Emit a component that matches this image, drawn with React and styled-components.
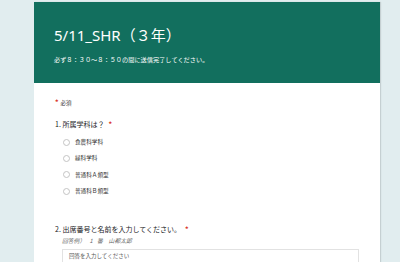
import React from 'react'
import styled, { createGlobalStyle } from 'styled-components'

const GlobalStyle = createGlobalStyle`
  body {
    margin: 0;
    background: #e1edef;
    font-family: "Noto Sans CJK JP", "Noto Sans", sans-serif;
    overflow: hidden;
  }
`

const Page = styled.div`
  padding: 2px 0 0 34px;
  height: 260px;
`

const Card = styled.section`
  width: 346px;
  background: #fff;
  box-shadow: 1px 0 1px rgba(0, 0, 0, 0.12);
  min-height: 262px;
`

const Header = styled.header`
  background: #126f5e;
  height: 81px;
  box-sizing: border-box;
  padding: 21px 20px 0 20px;
  color: #fff;
`

const Title = styled.h1`
  margin: 0;
  font-family: "Noto Sans", "Noto Sans CJK JP", sans-serif;
  font-weight: 400;
  font-size: 15px;
  line-height: 24px;
`

const Sub = styled.p`
  margin: 8px 0 0 0;
  font-size: 6.2px;
  line-height: 10px;
`

const Body = styled.div`
  padding: 14px 0 0 21px;
`

const Required = styled.div`
  font-size: 5.5px;
  line-height: 10px;
  color: #333;
`

const Star = styled.span`
  color: #d93025;
  font-size: 7px;
  font-weight: 700;
  margin-left: ${p => p.gap || 0}px;
  margin-right: ${p => p.after || 0}px;
`

const Question = styled.div`
  margin-top: ${p => p.top}px;
`

const QTitle = styled.div`
  font-size: 7px;
  line-height: 12px;
  color: #202124;
`

const Options = styled.div`
  display: flex;
  flex-direction: column;
  gap: 6.4px;
  margin: 7px 0 0 8px;
`

const Option = styled.label`
  display: flex;
  align-items: center;
  gap: 5px;
  font-size: 5.6px;
  line-height: 10px;
  color: #333;
`

const Radio = styled.span`
  width: 5px;
  height: 5px;
  border: 1px solid #c4c4c4;
  border-radius: 50%;
`

const Hint = styled.div`
  margin: 1px 0 0 7px;
  font-size: 5.8px;
  line-height: 10px;
  font-style: italic;
  color: #666;
  word-spacing: 3px;
`

const Input = styled.div`
  margin: 3px 0 0 7px;
  width: 297px;
  height: 18px;
  box-sizing: border-box;
  border: 1px solid #e2e2e2;
  padding: 1px 0 0 6px;
  font-size: 5.5px;
  line-height: 10px;
  color: #555;
`

const options = ['食農科学科', '緑科学科', '普通科Ａ類型', '普通科Ｂ類型']

export default function App () {
  return (
    <Page>
      <GlobalStyle />
      <Card>
        <Header>
          <Title>5/11_SHR（３年）</Title>
          <Sub>必ず８：３０～８：５０の間に送信完了してください。</Sub>
        </Header>
        <Body>
          <Required><Star after={2}>*</Star>必須</Required>
          <Question top={10}>
            <QTitle>1. 所属学科は？<Star gap={4}>*</Star></QTitle>
            <Options>
              {options.map(o => (
                <Option key={o}><Radio />{o}</Option>
              ))}
            </Options>
          </Question>
          <Question top={27}>
            <QTitle>2. 出席番号と名前を入力してください。<Star gap={4}>*</Star></QTitle>
            <Hint>回答例） 1 番　山都太郎</Hint>
            <Input>回答を入力してください</Input>
          </Question>
        </Body>
      </Card>
    </Page>
  )
}
